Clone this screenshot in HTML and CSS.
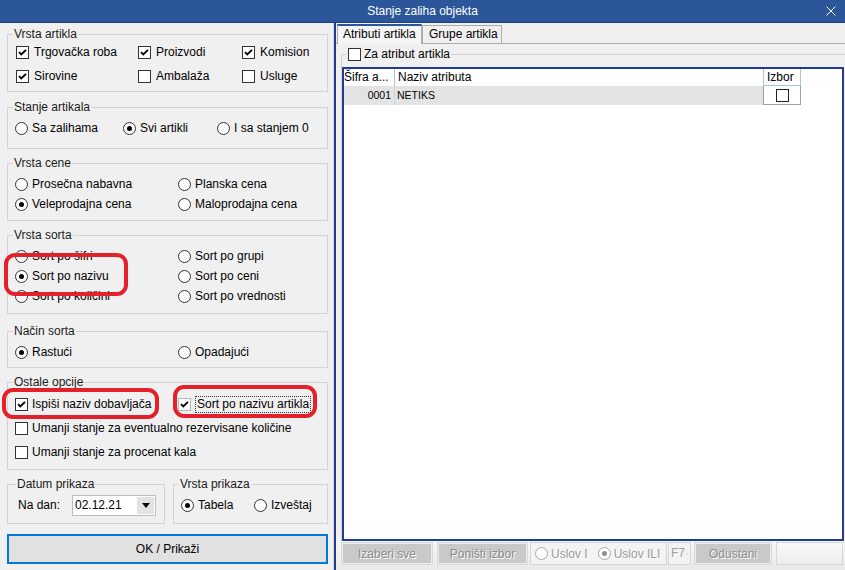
FILE: index.html
```html
<!DOCTYPE html>
<html lang="sr">
<head>
<meta charset="utf-8">
<title>Stanje zaliha objekta</title>
<link rel="stylesheet" href="styles.css">
</head>
<body>
<div class="window">
  <header class="titlebar">
    <span class="title">Stanje zaliha objekta</span>
    <svg class="close" viewBox="0 0 10 10"><path d="M0.5 0.5 L9.5 9.5 M9.5 0.5 L0.5 9.5"/></svg>
  </header>
  <div class="main">
    <aside class="left">
      <fieldset class="group g1">
        <legend>Vrsta artikla</legend>
        <div class="opts cols-a">
          <label class="opt"><span class="cb"><svg viewBox="0 0 11 11"><path d="M2 5.2 4.3 7.5 9 2.8"/></svg></span>Trgovačka roba</label>
          <label class="opt"><span class="cb"><svg viewBox="0 0 11 11"><path d="M2 5.2 4.3 7.5 9 2.8"/></svg></span>Proizvodi</label>
          <label class="opt"><span class="cb"><svg viewBox="0 0 11 11"><path d="M2 5.2 4.3 7.5 9 2.8"/></svg></span>Komision</label>
          <label class="opt"><span class="cb"><svg viewBox="0 0 11 11"><path d="M2 5.2 4.3 7.5 9 2.8"/></svg></span>Sirovine</label>
          <label class="opt"><span class="cb"></span>Ambalaža</label>
          <label class="opt"><span class="cb"></span>Usluge</label>
        </div>
      </fieldset>

      <fieldset class="group g2">
        <legend>Stanje artikala</legend>
        <div class="opts cols-b">
          <label class="opt r"><span class="rb"></span>Sa zalihama</label>
          <label class="opt r"><span class="rb on"></span>Svi artikli</label>
          <label class="opt r"><span class="rb"></span>I sa stanjem 0</label>
        </div>
      </fieldset>

      <fieldset class="group g3">
        <legend>Vrsta cene</legend>
        <div class="opts cols-c">
          <label class="opt r"><span class="rb"></span>Prosečna nabavna</label>
          <label class="opt r"><span class="rb"></span>Planska cena</label>
          <label class="opt r"><span class="rb on"></span>Veleprodajna cena</label>
          <label class="opt r"><span class="rb"></span>Maloprodajna cena</label>
        </div>
      </fieldset>

      <fieldset class="group g4">
        <legend>Vrsta sorta</legend>
        <div class="opts cols-c">
          <label class="opt r"><span class="rb"></span>Sort po šifri</label>
          <label class="opt r"><span class="rb"></span>Sort po grupi</label>
          <label class="opt r"><span class="rb on"></span>Sort po nazivu</label>
          <label class="opt r"><span class="rb"></span>Sort po ceni</label>
          <label class="opt r"><span class="rb"></span>Sort po količini</label>
          <label class="opt r"><span class="rb"></span>Sort po vrednosti</label>
        </div>
      </fieldset>

      <fieldset class="group g5">
        <legend>Način sorta</legend>
        <div class="opts cols-c">
          <label class="opt r"><span class="rb on"></span>Rastući</label>
          <label class="opt r"><span class="rb"></span>Opadajući</label>
        </div>
      </fieldset>

      <fieldset class="group g6">
        <legend>Ostale opcije</legend>
        <div class="opts cols-d">
          <label class="opt c2"><span class="cb"><svg viewBox="0 0 11 11"><path d="M2 5.2 4.3 7.5 9 2.8"/></svg></span>Ispiši naziv dobavljača</label>
          <label class="opt c2"><span class="cb light"><svg viewBox="0 0 11 11"><path d="M2 5.2 4.3 7.5 9 2.8"/></svg></span><span class="focus">Sort po nazivu artikla</span></label>
          <label class="opt c2 span"><span class="cb"></span>Umanji stanje za eventualno rezervisane količine</label>
          <label class="opt c2 span"><span class="cb"></span>Umanji stanje za procenat kala</label>
        </div>
      </fieldset>

      <div class="bottom-groups">
        <fieldset class="group g7">
          <legend>Datum prikaza</legend>
          <div class="date-row">
            <span class="date-label">Na dan:</span>
            <span class="datebox"><span class="date-val">02.12.21</span><span class="dd"><span class="tri"></span></span></span>
          </div>
        </fieldset>
        <fieldset class="group g8">
          <legend>Vrsta prikaza</legend>
          <div class="opts cols-e">
            <label class="opt r"><span class="rb on"></span>Tabela</label>
            <label class="opt r"><span class="rb"></span>Izveštaj</label>
          </div>
        </fieldset>
      </div>

      <button class="ok" type="button">OK / Prikaži</button>

      <div class="mark m1"></div>
      <div class="mark m2"></div>
      <div class="mark m3"></div>
    </aside>

    <div class="divider"></div>

    <section class="right">
      <div class="tabs">
        <div class="tab active">Atributi artikla</div>
        <div class="tab second">Grupe artikla</div>
      </div>
      <div class="page">
        <fieldset class="attr">
          <legend><span class="opt leg"><span class="cb"></span>Za atribut artikla</span></legend>
          <div class="grid">
            <div class="row head">
              <div class="c1">Šifra a...</div>
              <div class="c2">Naziv atributa</div>
              <div class="c3">Izbor</div>
            </div>
            <div class="row data">
              <div class="c1">0001</div>
              <div class="c2">NETIKS</div>
              <div class="c3"><span class="cb"></span></div>
            </div>
          </div>
        </fieldset>
      </div>
      <div class="bar">
        <div class="btn b1">Izaberi sve</div>
        <div class="btn b2">Poništi izbor</div>
        <div class="rg">
          <span class="opt dis"><span class="rb dis"></span>Uslov I</span>
          <span class="opt dis second-r"><span class="rb dis on"></span>Uslov ILI</span>
        </div>
        <div class="f7">F7<span class="dot">·</span></div>
        <div class="btn b3">Odustani</div>
        <div class="blank"></div>
      </div>
    </section>
  </div>
</div>
</body>
</html>
```

FILE: styles.css
```css
* { box-sizing: border-box; }
html, body { margin: 0; padding: 0; }
body {
  width: 845px;
  height: 570px;
  overflow: hidden;
  background: #f0f0f0;
  font-family: "Liberation Sans", Arial, sans-serif;
  font-size: 12px;
  color: #000;
}
.window { display: flex; flex-direction: column; height: 570px; }

/* title bar */
.titlebar {
  height: 23px;
  flex: none;
  background: #2b579a;
  border-bottom: 1px solid #1d3f78;
  display: grid;
  grid-template-columns: 1fr auto 1fr;
  align-items: center;
  color: #fff;
}
.title { grid-column: 2; line-height: 14px; }
.close {
  grid-column: 3;
  justify-self: end;
  width: 10px;
  height: 10px;
  margin-right: 9px;
  stroke: #fff;
  stroke-width: 1;
  fill: none;
}

.main { flex: 1; display: flex; min-height: 0; }

/* left panel */
.left {
  width: 334px;
  flex: none;
  position: relative;
  border-right: 1px solid #dcdcdc;
  padding: 4px 5px 0 7px;
  display: flex;
  flex-direction: column;
}
.divider { width: 2px; flex: none; background: #1f3a8f; }

.group {
  margin: 0;
  border: 1px solid #d3d3d3;
  padding: 0 4px 0 7px;
  min-width: 0;
}
.group legend {
  padding: 0 1px;
  margin-left: -2px;
  line-height: 14px;
  color: #1a1a1a;
}
.g1 { padding-bottom: 4px; }
.g2 { margin-top: 8px; padding-top: 3px; padding-bottom: 9px; }
.g3 { margin-top: 7px; padding-top: 4px; padding-bottom: 6px; }
.g4 { margin-top: 7px; padding-top: 4px; padding-bottom: 7px; }
.g5 { margin-top: 10px; padding-top: 4px; padding-bottom: 5px; }
.g6 { margin-top: 7px; padding-top: 3px; padding-bottom: 5px; }

.opts { display: grid; align-items: center; }
.cols-a { grid-template-columns: 122px 104px 1fr; grid-auto-rows: 22px; row-gap: 2px; }
.cols-a .cb { margin-left: 1px; }
.cols-b { grid-template-columns: 108px 94px 1fr; grid-auto-rows: 22px; }
.cols-c { grid-template-columns: 163px 1fr; grid-auto-rows: 20px; }
.cols-d { grid-template-columns: 163px 1fr; grid-auto-rows: 24px; }
.cols-e { grid-template-columns: 73px 1fr; grid-auto-rows: 24px; }
.span { grid-column: 1 / -1; }

.opt { display: flex; align-items: center; gap: 5px; white-space: nowrap; }
.opt.r { gap: 4px; }
.opt.c2 { gap: 4px; }

.cb {
  width: 13px;
  height: 13px;
  flex: none;
  border: 1px solid #333;
  background: #fff;
  display: grid;
  place-items: center;
}
.cb svg {
  width: 11px;
  height: 11px;
  display: block;
  fill: none;
  stroke: #000;
  stroke-width: 1.9;
}
.cb.light { border-color: #b8b8b8; }

.rb {
  width: 13px;
  height: 13px;
  flex: none;
  border: 1px solid #333;
  border-radius: 50%;
  background: #fff;
  display: grid;
  place-items: center;
}
.rb.on::after {
  content: "";
  width: 5px;
  height: 5px;
  border-radius: 50%;
  background: #000;
}

.focus {
  border: 1px dotted #333;
  padding: 0 1px;
  line-height: 15px;
}

.bottom-groups { margin-top: 7px; display: flex; gap: 8px; }
.bottom-groups .group { flex: 1; padding-top: 2px; padding-bottom: 6px; }
.g7 { padding-left: 10px; }
.date-row { display: flex; align-items: center; height: 24px; }
.date-label { width: 54px; }
.datebox {
  width: 84px;
  height: 21px;
  border: 1px solid #bdbdbd;
  background: #fff;
  display: flex;
  align-items: center;
  padding-left: 2px;
}
.date-val { flex: 1; }
.dd {
  width: 17px;
  height: 17px;
  margin-right: 1px;
  background: #e3e3e3;
  display: grid;
  place-items: center;
}
.tri {
  width: 0;
  height: 0;
  border-left: 4.5px solid transparent;
  border-right: 4.5px solid transparent;
  border-top: 5px solid #000;
}

.ok {
  margin-top: 10px;
  height: 30px;
  width: 100%;
  border: 2px solid #0078d7;
  background: #e1e1e1;
  font: inherit;
  color: #000;
  padding: 0;
}

/* annotation rings */
.mark {
  position: absolute;
  border: 4px solid #e4202a;
  border-radius: 11px;
}
.m1 { left: 4px; top: 230px; width: 124px; height: 43px; }
.m2 { left: 2px; top: 365px; width: 157px; height: 31px; }
.m3 { left: 173px; top: 362px; width: 144px; height: 33px; }

/* right panel */
.right { flex: 1; display: flex; flex-direction: column; min-width: 0; }
.tabs {
  height: 21px;
  flex: none;
  display: flex;
  align-items: flex-end;
  border-bottom: 1px solid #acacac;
  padding-left: 1px;
}
.tab {
  border: 1px solid #acacac;
  border-bottom: none;
  background: #f0f0f0;
  white-space: nowrap;
}
.tab.active {
  width: 85px;
  height: 20px;
  margin-bottom: -1px;
  border-top: 2px solid #2b579a;
  padding-left: 5px;
  line-height: 17px;
  background: #f5f5f5;
}
.tab.second {
  width: 80px;
  height: 18px;
  padding-left: 6px;
  line-height: 17px;
}

.page { flex: 1; min-height: 0; }
.attr {
  margin: 3px 0 0 5px;
  border: 1px solid #d3d3d3;
  border-right: none;
  border-bottom: none;
  padding: 6px 1px 0 0;
  min-width: 0;
}
.attr legend { margin-left: 5px; padding: 0 1px; line-height: 14px; }
.opt.leg { gap: 3px; }

.grid {
  height: 474px;
  border: 2px solid #1f3c98;
  background: #fff;
}
.row { display: grid; grid-template-columns: 51px 369px 37px; }
.head { height: 17px; line-height: 17px; }
.head > div {
  border-right: 1px solid #aac4e6;
  padding-left: 3px;
  white-space: nowrap;
  overflow: hidden;
}
.head .c1 { padding-left: 0; }
.head .c3 { border-bottom: 1px solid #aac4e6; }
.data { height: 19px; font-size: 10.5px; line-height: 19px; }
.data .c1 {
  background: #e3e3e3;
  text-align: right;
  padding-right: 3px;
  border-right: 1px solid #d2d2d2;
}
.data .c2 {
  background: #e3e3e3;
  padding-left: 2px;
  border-right: 1px solid #a0a0a0;
}
.data .c3 {
  border-right: 1px solid #a0a0a0;
  border-bottom: 1px solid #a0a0a0;
  display: grid;
  place-items: center;
}
.data .c3 .cb { border-color: #222; }

/* bottom bar */
.bar {
  height: 29px;
  flex: none;
  display: flex;
  align-items: flex-start;
  padding: 1px 2px 0 5px;
  background: linear-gradient(#f7f7f7, #e9e9e9);
}
.btn {
  height: 23px;
  background: #c9c9c9;
  border: 1px solid #d9d9d9;
  box-shadow: inset 0 0 0 1px #ececec;
  color: #8c8c8c;
  text-shadow: 1px 1px 0 #fff;
  display: grid;
  place-items: center;
  white-space: nowrap;
}
.b1 { width: 92px; }
.b2 { width: 91px; margin-left: 4px; }
.rg {
  width: 137px;
  height: 23px;
  margin-left: 2px;
  border: 1px solid #d6d6d6;
  background: #f3f3f3;
  display: flex;
  align-items: center;
  padding-left: 4px;
  color: #9a9a9a;
  text-shadow: 1px 1px 0 #fff;
}
.opt.dis { gap: 3px; }
.second-r { margin-left: 10px; }
.rb.dis { border-color: #a8a8a8; background: #fdfdfd; }
.rb.dis.on::after { background: #8e8e8e; }
.f7 {
  width: 23px;
  height: 23px;
  margin-left: 1px;
  border: 1px solid #d6d6d6;
  background: #f3f3f3;
  color: #a0a0a0;
  padding-left: 2px;
  line-height: 21px;
  white-space: nowrap;
}
.dot { color: #c8c8c8; }
.b3 { width: 78px; margin-left: 3px; }
.blank {
  flex: 1;
  height: 23px;
  margin-left: 4px;
  border: 1px solid #d8d8d8;
  background: linear-gradient(#f9f9f9, #ededed);
}
```
